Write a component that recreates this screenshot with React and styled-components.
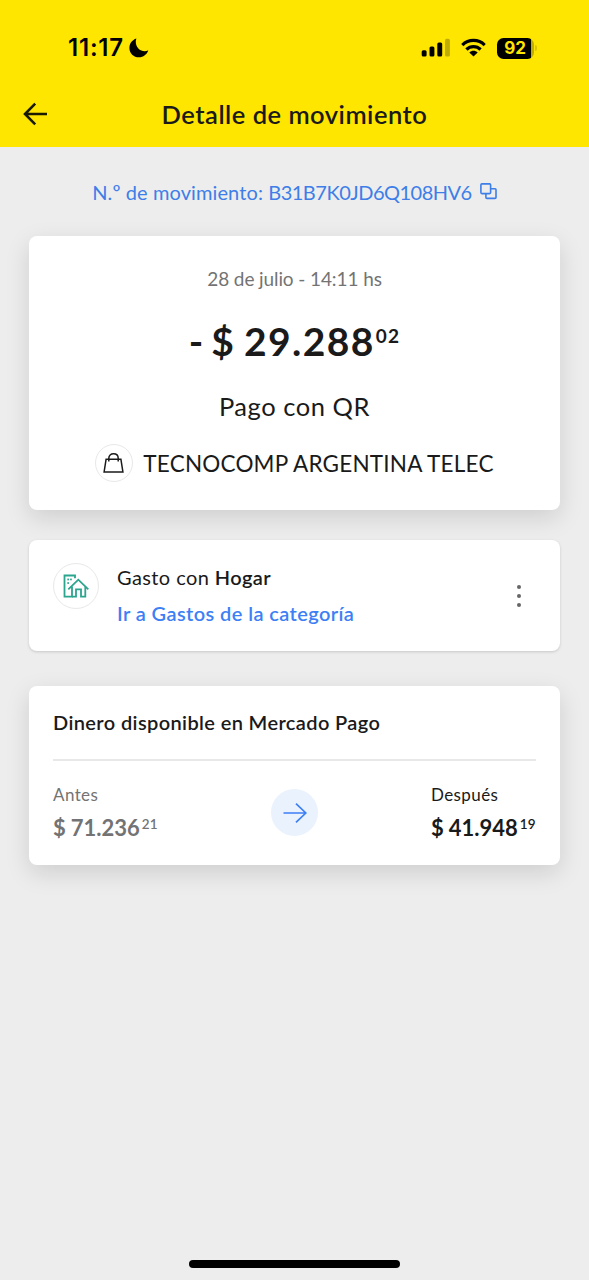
import styled, { createGlobalStyle } from 'styled-components';

export default function App() {
  return (
    <>
      <GlobalStyle />
      <Screen>
        <TopBar>
          <StatusBar>
            <Clock>
              <ClockText>11:17</ClockText>
              <MoonIcon />
            </Clock>
            <StatusIcons>
              <SignalIcon />
              <WifiIcon />
              <Battery>
                <BatteryBody>92</BatteryBody>
                <BatteryCap />
              </Battery>
            </StatusIcons>
          </StatusBar>
          <NavBar>
            <BackButton aria-label="Volver">
              <BackIcon />
            </BackButton>
            <Title>Detalle de movimiento</Title>
          </NavBar>
        </TopBar>

        <Content>
          <MovementNumber>
            <MovementText>
              N.º de movimiento: <MovementCode>B31B7K0JD6Q108HV6</MovementCode>
            </MovementText>
            <CopyIcon />
          </MovementNumber>

          <SummaryCard>
            <DateText>28 de julio - 14:11 hs</DateText>
            <Amount>
              <Minus>-</Minus>
              <Currency>$</Currency>
              <Units>29.288</Units>
              <Cents>02</Cents>
            </Amount>
            <Operation>Pago con QR</Operation>
            <Merchant>
              <IconCircle $size={38}>
                <BagIcon />
              </IconCircle>
              <MerchantName>TECNOCOMP ARGENTINA TELEC</MerchantName>
            </Merchant>
          </SummaryCard>

          <CategoryCard>
            <IconCircle $size={46}>
              <HouseIcon />
            </IconCircle>
            <CategoryInfo>
              <div>
                Gasto con <CategoryName>Hogar</CategoryName>
              </div>
              <CategoryLink>Ir a Gastos de la categoría</CategoryLink>
            </CategoryInfo>
            <MenuButton aria-label="Más opciones">
              <Dot />
              <Dot />
              <Dot />
            </MenuButton>
          </CategoryCard>

          <BalanceCard>
            <BalanceTitle>Dinero disponible en Mercado Pago</BalanceTitle>
            <BalanceRow>
              <Balance label="Antes" units="71.236" cents="21" color="#737373" />
              <ArrowCircle>
                <ArrowIcon />
              </ArrowCircle>
              <Balance label="Después" units="41.948" cents="19" color="#1a1a1a" />
            </BalanceRow>
          </BalanceCard>
        </Content>

        <HomeIndicator />
      </Screen>
    </>
  );
}

function Balance({ label, units, cents, color }) {
  return (
    <BalanceColumn $color={color}>
      <BalanceLabel>{label}</BalanceLabel>
      <BalanceAmount>
        <span>$</span>
        <BalanceUnits>{units}</BalanceUnits>
        <BalanceCents>{cents}</BalanceCents>
      </BalanceAmount>
    </BalanceColumn>
  );
}

function MoonIcon() {
  return (
    <svg width="20" height="20" viewBox="0 0 20 20">
      <path
        d="M7.4 0.6C6.8 2.2 6.7 3.6 6.9 5.2C7.6 9.8 11.2 13.1 15.6 13.2C17 13.2 18.2 12.9 19.3 12.3C18 16.6 14.3 19.3 10 19.3C4.6 19.3 0.4 15.2 0.4 9.9C0.4 5.6 3.2 1.9 7.4 0.6Z"
        fill="#000"
      />
    </svg>
  );
}

function SignalIcon() {
  return (
    <svg width="29" height="20" viewBox="0 0 29 20">
      <rect x="0.7" y="12.2" width="4.9" height="6.4" rx="1.5" />
      <rect x="8.5" y="8.5" width="4.9" height="10.1" rx="1.5" />
      <rect x="16.3" y="4.5" width="4.9" height="14.1" rx="1.5" />
      <rect x="24" y="0.7" width="4.9" height="17.9" rx="1.5" opacity="0.25" />
    </svg>
  );
}

function WifiIcon() {
  return (
    <svg width="25" height="20" viewBox="0 0 25 20">
      <g fill="none" stroke="#000" strokeWidth="3.2">
        <path d="M1.3 7.1C7.6 0.9 17.4 0.9 23.7 7.1" />
        <path d="M5.4 11.5C9.4 7.6 15.6 7.6 19.6 11.5" />
      </g>
      <path d="M12.5 18.6L8.3 14.4C10.7 12.2 14.3 12.2 16.7 14.4Z" />
    </svg>
  );
}

function BackIcon() {
  return (
    <svg width="25" height="24" viewBox="0 0 25 24">
      <path
        d="M24 12H2.2M12.2 1.6L2 12L12.2 22.4"
        fill="none"
        stroke="#1a1a00"
        strokeWidth="2.6"
      />
    </svg>
  );
}

function CopyIcon() {
  return (
    <svg width="17" height="17" viewBox="0 0 17 17">
      <g fill="none" stroke="#3d7ee8" strokeWidth="1.6">
        <rect x="0.9" y="0.9" width="9.7" height="9.7" rx="1" />
        <path d="M10.6 5.7H15Q16 5.7 16 6.7V14.4Q16 15.4 15 15.4H6.9Q5.9 15.4 5.9 14.4V10.6" />
      </g>
    </svg>
  );
}

function BagIcon() {
  return (
    <svg width="22" height="20" viewBox="0 0 22 20">
      <g fill="none" stroke="#1a1a1a" strokeWidth="1.5">
        <path d="M3.1 6.2H17.9L19.9 19H1.1Z" />
        <path d="M5.8 8.6V5.2C5.8 2.4 7.8 0.8 10.5 0.8C13.2 0.8 15.2 2.4 15.2 5.2V8.6" />
      </g>
    </svg>
  );
}

function HouseIcon() {
  return (
    <svg width="26" height="24" viewBox="0 0 26 24">
      <g fill="none" stroke="#2ba58d" strokeWidth="1.8">
        <path d="M12 4.3V1.5H1.5V22.7H9V12.4" />
        <path d="M5.3 15.4L15.3 5.7L25.3 15.4" />
        <path d="M9 22.7H13V15.4H18V22.7H22.3V12.8" />
      </g>
      <g fill="#2ba58d">
        <rect x="4.3" y="4.6" width="1.7" height="1.7" />
        <rect x="7.1" y="4.6" width="1.7" height="1.7" />
        <rect x="4.3" y="8.2" width="1.7" height="1.7" />
      </g>
    </svg>
  );
}

function ArrowIcon() {
  return (
    <svg width="24" height="20" viewBox="0 0 24 20">
      <path
        d="M0.5 10H22.8M13 0.7L22.8 10L13 19.3"
        fill="none"
        stroke="#3d7ff5"
        strokeWidth="1.7"
      />
    </svg>
  );
}

const GlobalStyle = createGlobalStyle`
  * {
    box-sizing: border-box;
  }

  body {
    margin: 0;
    background-color: #ededed;
    color: #1a1a1a;
    font-family: Lato, 'Liberation Sans', sans-serif;
  }

  svg {
    display: block;
    flex-shrink: 0;
  }

  button {
    border: none;
    padding: 0;
    background: none;
  }
`;

const Screen = styled.div`
  display: flex;
  flex-direction: column;
  width: 589px;
  height: 1280px;
  overflow: hidden;
`;

const TopBar = styled.header`
  height: 147px;
  background-color: #ffe600;
`;

const StatusBar = styled.div`
  display: flex;
  align-items: center;
  justify-content: space-between;
  height: 83px;
  padding: 13px 52px 0 68px;
`;

const Clock = styled.div`
  display: flex;
  align-items: center;
  gap: 5px;
  color: #000;
`;

const ClockText = styled.span`
  font-family: Inter, sans-serif;
  font-size: 24px;
  font-weight: 600;
  letter-spacing: 0.8px;
  line-height: 28px;
`;

const StatusIcons = styled.div`
  display: flex;
  align-items: center;
  gap: 11px;
`;

const Battery = styled.div`
  display: flex;
  align-items: center;
  gap: 1px;
`;

const BatteryBody = styled.div`
  width: 37px;
  height: 21px;
  border-radius: 6.5px;
  background: linear-gradient(to right, #000 34px, #bfad00 34px);
  padding-right: 1px;
  color: #ffe600;
  font-family: Inter, sans-serif;
  font-size: 17px;
  font-weight: 700;
  line-height: 21px;
  text-align: center;
`;

const BatteryCap = styled.div`
  width: 2px;
  height: 6px;
  border-radius: 0 2px 2px 0;
  background-color: #d9c400;
`;

const NavBar = styled.div`
  display: grid;
  grid-template-columns: 60px 1fr 60px;
  align-items: center;
  height: 62px;
`;

const BackButton = styled.button`
  padding-left: 23px;
`;

const Title = styled.h1`
  margin: 0;
  font-size: 25.5px;
  font-weight: 600;
  letter-spacing: 0.5px;
  line-height: 32px;
  text-align: center;
  white-space: nowrap;
`;

const Content = styled.main`
  display: flex;
  flex: 1;
  flex-direction: column;
  padding: 0 29px;
`;

const MovementNumber = styled.div`
  display: flex;
  align-items: center;
  justify-content: center;
  gap: 8px;
  height: 89px;
  color: #3d7ee8;
`;

const MovementText = styled.span`
  font-size: 20px;
  letter-spacing: 0.1px;
  line-height: 24px;
  white-space: nowrap;
`;

const MovementCode = styled.span`
  letter-spacing: -0.5px;
`;

const Card = styled.section`
  border-radius: 8px;
  background-color: #fff;
`;

const SummaryCard = styled(Card)`
  display: flex;
  flex-direction: column;
  align-items: center;
  height: 274px;
  padding-top: 31px;
  box-shadow: 0 8px 24px rgba(0, 0, 0, 0.13);
`;

const DateText = styled.div`
  color: #737373;
  font-size: 19px;
  letter-spacing: -0.1px;
  line-height: 24px;
`;

const Amount = styled.div`
  display: flex;
  align-items: flex-start;
  margin-top: 26px;
  font-size: 39px;
  font-weight: 700;
  line-height: 48px;
`;

const Minus = styled.span`
  margin-right: 8px;
`;

const Currency = styled.span`
  margin-right: 10px;
`;

const Units = styled.span`
  letter-spacing: 1.4px;
`;

const Cents = styled.span`
  margin-left: 1px;
  font-size: 19px;
  letter-spacing: 1.2px;
  line-height: 38px;
`;

const Operation = styled.div`
  margin-top: 25px;
  font-size: 25.5px;
  letter-spacing: 0.55px;
  line-height: 32px;
`;

const Merchant = styled.div`
  display: flex;
  align-items: center;
  gap: 10px;
  margin-top: 22px;
`;

const MerchantName = styled.span`
  padding-top: 2px;
  font-size: 22.5px;
  letter-spacing: 0.2px;
  line-height: 28px;
  white-space: nowrap;
`;

const IconCircle = styled.div`
  display: flex;
  align-items: center;
  justify-content: center;
  flex-shrink: 0;
  width: ${(props) => props.$size}px;
  height: ${(props) => props.$size}px;
  border: 1px solid #e8e8e8;
  border-radius: 50%;
`;

const CategoryCard = styled(Card)`
  display: flex;
  align-items: flex-start;
  height: 111px;
  margin-top: 30px;
  padding: 23px 24px 0;
  box-shadow: 0 1px 3px rgba(0, 0, 0, 0.16);
`;

const CategoryInfo = styled.div`
  flex: 1;
  margin-left: 18px;
  font-size: 20px;
  letter-spacing: 0.4px;
  line-height: 28px;
`;

const CategoryName = styled.span`
  font-weight: 600;
`;

const CategoryLink = styled.div`
  margin-top: 8px;
  color: #3d7ff5;
  font-weight: 600;
`;

const MenuButton = styled.button`
  display: flex;
  flex-direction: column;
  align-items: center;
  gap: 5px;
  width: 34px;
  padding-top: 22px;
`;

const Dot = styled.span`
  width: 4px;
  height: 4px;
  border-radius: 50%;
  background-color: #666;
`;

const BalanceCard = styled(Card)`
  height: 179px;
  margin-top: 35px;
  padding: 0 24px;
  box-shadow: 0 8px 24px rgba(0, 0, 0, 0.13);
`;

const BalanceTitle = styled.h2`
  height: 75px;
  margin: 0;
  border-bottom: 2px solid #e8e8e8;
  font-size: 20px;
  font-weight: 600;
  letter-spacing: 0.38px;
  line-height: 73px;
`;

const BalanceRow = styled.div`
  display: flex;
  justify-content: space-between;
  padding-top: 22px;
`;

const BalanceColumn = styled.div`
  width: 105px;
  color: ${(props) => props.$color};
`;

const BalanceLabel = styled.div`
  font-size: 17px;
  letter-spacing: 0.4px;
  line-height: 24px;
`;

const BalanceAmount = styled.div`
  display: flex;
  align-items: flex-start;
  margin-top: 7px;
  font-size: 22px;
  font-weight: 700;
  line-height: 28px;
`;

const BalanceUnits = styled.span`
  margin-left: 5px;
`;

const BalanceCents = styled.span`
  margin-left: 2px;
  font-size: 13.5px;
  font-weight: 600;
  line-height: 20px;
`;

const ArrowCircle = styled.div`
  display: flex;
  align-items: center;
  justify-content: center;
  width: 47px;
  height: 47px;
  margin-top: 6px;
  border-radius: 50%;
  background-color: #e9f2fd;
`;

const HomeIndicator = styled.div`
  align-self: center;
  width: 211px;
  height: 8px;
  margin-bottom: 12px;
  border-radius: 4px;
  background-color: #000;
`;
